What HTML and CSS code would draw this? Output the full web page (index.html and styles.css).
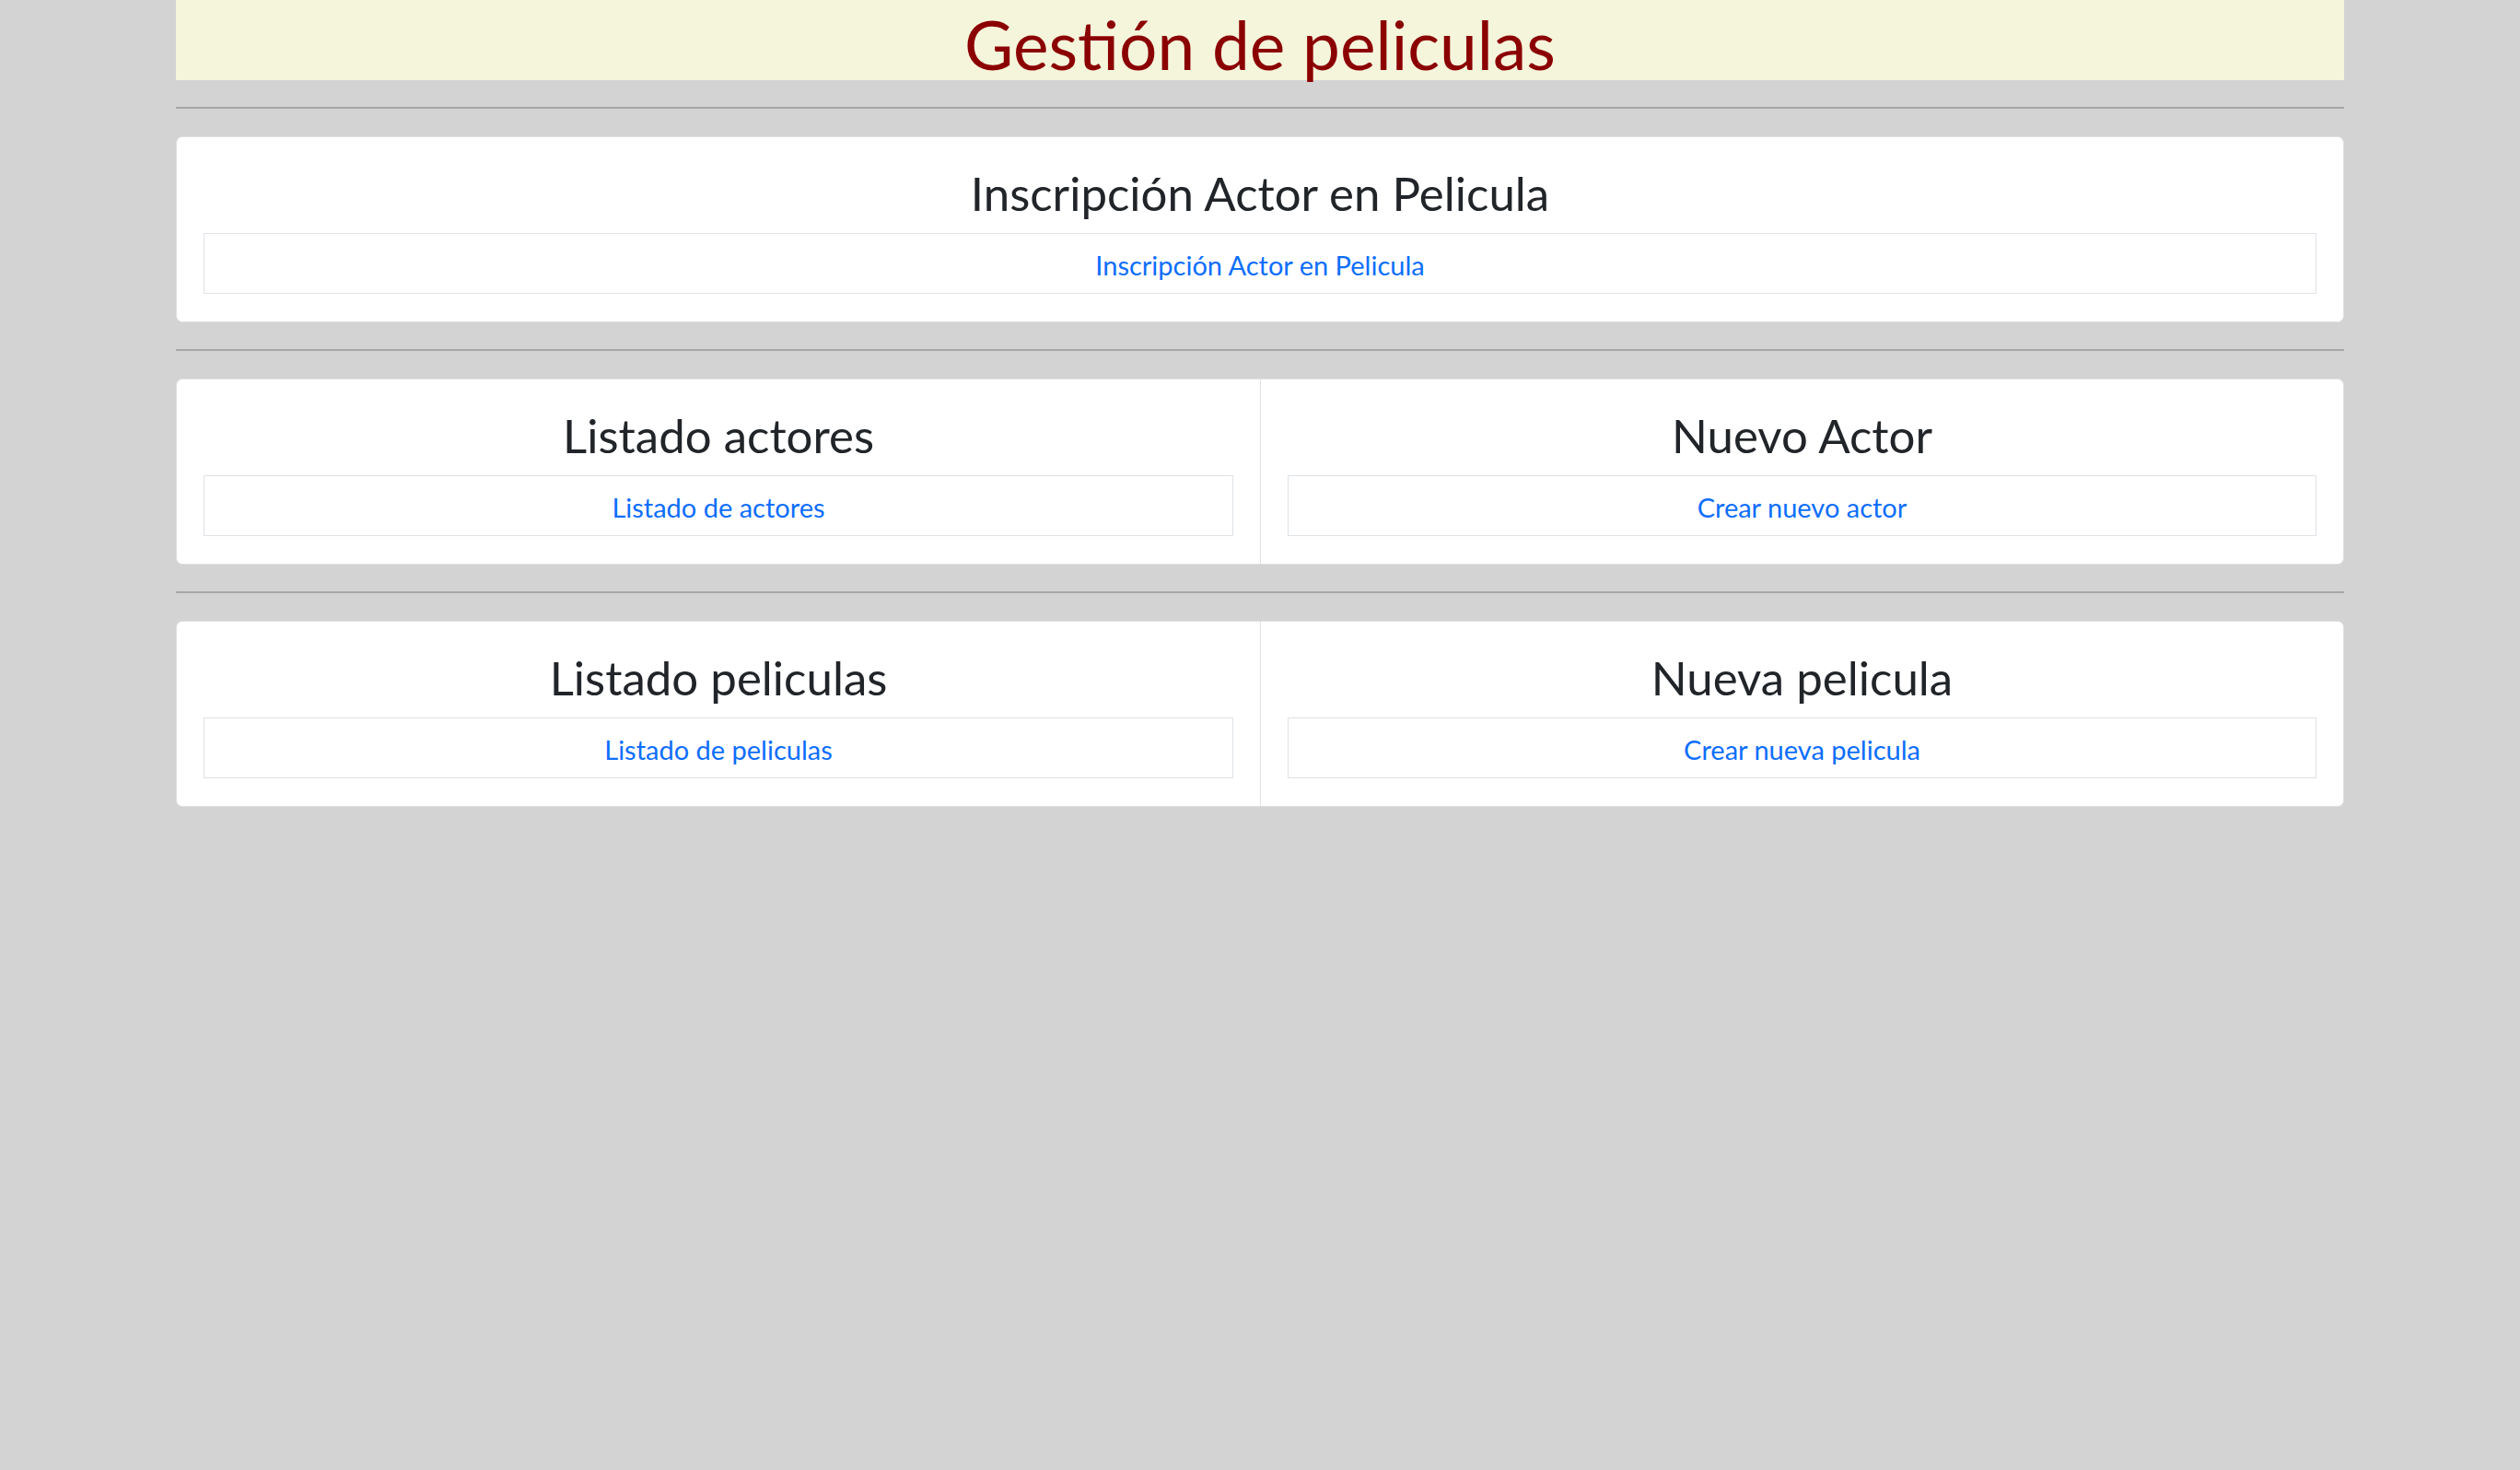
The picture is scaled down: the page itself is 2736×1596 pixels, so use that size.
FILE: index.html
```html
<!DOCTYPE html>
<html lang="es">
<head>
<meta charset="utf-8">
<title>Gestión de peliculas</title>
<link rel="stylesheet" href="styles.css">
</head>
<body>
<div class="page">
  <header class="banner">
    <h1 class="banner-title">Gestión de peliculas</h1>
  </header>

  <hr class="rule">

  <section class="card">
    <div class="card-body">
      <h3 class="card-title">Inscripción Actor en Pelicula</h3>
      <ul class="link-list">
        <li class="link-item"><a class="link" href="#">Inscripción Actor en Pelicula</a></li>
      </ul>
    </div>
  </section>

  <hr class="rule">

  <section class="card card-split">
    <div class="card-body">
      <h3 class="card-title">Listado actores</h3>
      <ul class="link-list">
        <li class="link-item"><a class="link" href="#">Listado de actores</a></li>
      </ul>
    </div>
    <div class="card-body card-body-divided">
      <h3 class="card-title">Nuevo Actor</h3>
      <ul class="link-list">
        <li class="link-item"><a class="link" href="#">Crear nuevo actor</a></li>
      </ul>
    </div>
  </section>

  <hr class="rule">

  <section class="card card-split">
    <div class="card-body">
      <h3 class="card-title">Listado peliculas</h3>
      <ul class="link-list">
        <li class="link-item"><a class="link" href="#">Listado de peliculas</a></li>
      </ul>
    </div>
    <div class="card-body card-body-divided">
      <h3 class="card-title">Nueva pelicula</h3>
      <ul class="link-list">
        <li class="link-item"><a class="link" href="#">Crear nueva pelicula</a></li>
      </ul>
    </div>
  </section>
</div>
</body>
</html>
```

FILE: styles.css
```css
* {
  box-sizing: border-box;
}

html, body {
  margin: 0;
  padding: 0;
}

body {
  background: #d3d3d3;
  font-family: "Lato", "Open Sans", "Noto Sans", sans-serif;
  color: #212529;
  min-height: 1596px;
}

.page {
  width: 2354px;
  margin: 0 auto;
}

.banner {
  height: 87px;
  background: #f5f5dc;
  text-align: center;
}

.banner-title {
  margin: 0;
  padding-top: 3px;
  font-size: 73px;
  font-weight: 400;
  line-height: 90px;
  color: #8b0000;
}

.rule {
  margin: 29px 0 30px;
  border: 0;
  border-top: 2px solid #a7a7a7;
  height: 0;
}

.card {
  background: #ffffff;
  border: 1px solid #e1e1e1;
  border-radius: 7px;
}

.card-split {
  display: grid;
  grid-template-columns: 1fr 1fr;
}

.card-body {
  padding: 31px 29px 30px;
  text-align: center;
}

.card-body-divided {
  border-left: 1px solid #dee2e6;
}

.card-title {
  margin: 0 0 13px;
  font-size: 51px;
  font-weight: 400;
  line-height: 60px;
  color: #212529;
}

.link-list {
  list-style: none;
  margin: 0;
  padding: 0;
}

.link-item {
  border: 1px solid #dee2e6;
  padding: 13px 16px 9px;
  font-size: 29px;
  line-height: 42px;
}

.link {
  color: #0d6efd;
  text-decoration: none;
}
```
